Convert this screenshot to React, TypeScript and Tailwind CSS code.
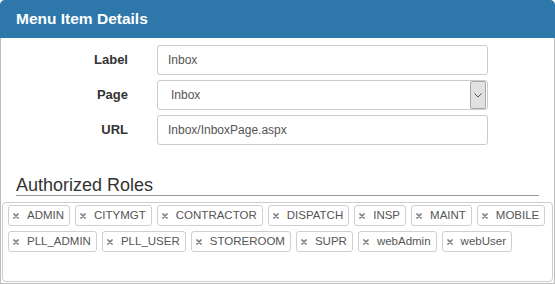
import React from 'react';

const ROLES_ROW = [
  'ADMIN',
  'CITYMGT',
  'CONTRACTOR',
  'DISPATCH',
  'INSP',
  'MAINT',
  'MOBILE',
  'PLL_ADMIN',
  'PLL_USER',
  'STOREROOM',
  'SUPR',
  'webAdmin',
  'webUser',
];

function RemoveIcon() {
  return (
    <svg width="6" height="6" viewBox="0 0 6 6" className="shrink-0">
      <path d="M1 1 L5 5 M5 1 L1 5" stroke="#7a7a7a" strokeWidth="1.7" strokeLinecap="round" />
    </svg>
  );
}

function Tag({ label }: { label: string }) {
  return (
    <div className="flex h-[21px] items-center gap-[8px] rounded-[3px] border border-[#cfcfcf] bg-white pl-[4px] pr-[5px] text-[11.5px] text-[#555]">
      <RemoveIcon />
      <span>{label}</span>
    </div>
  );
}

function FormRow({ label, children }: { label: string; children: React.ReactNode }) {
  return (
    <div className="flex items-center">
      <label className="w-[127px] text-right text-[13px] font-bold text-[#333]">{label}</label>
      <div className="ml-[29px] w-[331px]">{children}</div>
    </div>
  );
}

export default function App() {
  return (
    <div className="h-[284px] w-[555px] bg-white font-['Liberation_Sans',Arial,sans-serif]">
      <div className="flex h-full flex-col rounded-t-[5px] border-x border-b border-[#bdbdbd]">
        <div className="-mx-px flex h-[38px] items-center rounded-t-[5px] bg-[#2e77ab] px-[16px]">
          <h2 className="text-[15.5px] font-bold text-white">Menu Item Details</h2>
        </div>

        <div className="flex flex-col gap-[5px] pt-[7px]">
          <FormRow label="Label">
            <div className="flex h-[30px] items-center rounded-[3px] border border-[#ccc] px-[10px] text-[12px] text-[#555]">
              Inbox
            </div>
          </FormRow>
          <FormRow label="Page">
            <div className="flex h-[30px] items-center rounded-[3px] border border-[#ccc] pl-[13px] pr-px text-[12px] text-[#555]">
              <span className="flex-1">Inbox</span>
              <div className="flex h-[28px] w-[16px] items-center justify-center rounded-[2px] border border-[#a9a9a9] bg-[#e1e1e1]">
                <svg width="8" height="5" viewBox="0 0 8 5">
                  <path d="M0.5 0.5 L4 4 L7.5 0.5" fill="none" stroke="#555" strokeWidth="1" />
                </svg>
              </div>
            </div>
          </FormRow>
          <FormRow label="URL">
            <div className="flex h-[30px] items-center rounded-[3px] border border-[#ccc] px-[10px] text-[12px] text-[#555]">
              Inbox/InboxPage.aspx
            </div>
          </FormRow>
        </div>

        <div className="mx-[15px] mt-[31px] border-b border-[#999] pr-[4px]">
          <h3 className="text-[18px] leading-[19px] text-[#333]">Authorized Roles</h3>
        </div>

        <div className="mx-px mb-px mt-[6px] flex flex-1 flex-wrap content-start gap-x-[5px] gap-y-[5px] rounded-[4px] border border-[#ccc] pl-[5px] pr-[1px] pt-[2px]">
          {ROLES_ROW.map((r) => (
            <Tag key={r} label={r} />
          ))}
        </div>
      </div>
    </div>
  );
}
